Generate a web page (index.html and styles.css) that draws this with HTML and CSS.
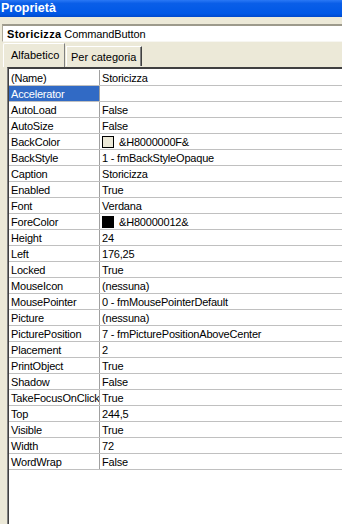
FILE: index.html
```html
<!DOCTYPE html>
<html lang="it">
<head>
    <meta charset="UTF-8">
    <title>Proprietà</title>
    <link rel="stylesheet" href="styles.css">
</head>
<body>
    <div class="window">
        <div class="titlebar">Proprietà</div>
        <div class="combo"><b>Storicizza</b> CommandButton</div>
        <div class="tabs">
            <div class="tab active">Alfabetico</div>
            <div class="tab">Per categoria</div>
        </div>
        <div class="grid" id="grid"></div>
    </div>
    <script>
        const props = [
            ["(Name)", "Storicizza"],
            ["Accelerator", ""],
            ["AutoLoad", "False"],
            ["AutoSize", "False"],
            ["BackColor", "&H8000000F&", "#ece9d8"],
            ["BackStyle", "1 - fmBackStyleOpaque"],
            ["Caption", "Storicizza"],
            ["Enabled", "True"],
            ["Font", "Verdana"],
            ["ForeColor", "&H80000012&", "#000000"],
            ["Height", "24"],
            ["Left", "176,25"],
            ["Locked", "True"],
            ["MouseIcon", "(nessuna)"],
            ["MousePointer", "0 - fmMousePointerDefault"],
            ["Picture", "(nessuna)"],
            ["PicturePosition", "7 - fmPicturePositionAboveCenter"],
            ["Placement", "2"],
            ["PrintObject", "True"],
            ["Shadow", "False"],
            ["TakeFocusOnClick", "True"],
            ["Top", "244,5"],
            ["Visible", "True"],
            ["Width", "72"],
            ["WordWrap", "False"]
        ];
        const grid = document.getElementById("grid");
        props.forEach(function (p, i) {
            let row = document.createElement("div");
            row.classList.add("row");
            let name = document.createElement("div");
            name.classList.add("name");
            if (i === 1) name.classList.add("selected");
            name.innerText = p[0];
            let value = document.createElement("div");
            value.classList.add("value");
            if (p[2]) {
                let sw = document.createElement("span");
                sw.classList.add("swatch");
                sw.style.background = p[2];
                value.appendChild(sw);
            }
            value.appendChild(document.createTextNode(p[1]));
            row.appendChild(name);
            row.appendChild(value);
            grid.appendChild(row);
        });
    </script>
</body>
</html>
```
FILE: styles.css
```css
body {
    margin: 0;
    background: #ffffff;
    font-family: 'Liberation Sans', Arial, sans-serif;
    font-size: 11px;
}
.window {
    width: 342px;
    height: 524px;
    background: #ece9d8;
    overflow: hidden;
}
.titlebar {
    height: 17px;
    line-height: 16px;
    padding-left: 1px;
    color: #ffffff;
    font-weight: bold;
    font-size: 12.5px;
    background: linear-gradient(#2a78f5, #0a5ee8 20%, #0058e6 80%, #0049cc);
}
.combo {
    margin: 7px 0 0 2px;
    height: 15px;
    line-height: 16px;
    background: #ffffff;
    border-top: 2px solid #9d9a8c;
    border-left: 1px solid #aca899;
    border-bottom: 1px solid #f7f6f1;
    padding-left: 4px;
    letter-spacing: -0.1px;
}
.combo b {
    letter-spacing: 0.3px;
}
.tabs {
    display: flex;
    align-items: flex-end;
    height: 24px;
    margin-top: 1px;
    padding-left: 3px;
}
.tab {
    height: 19px;
    line-height: 20px;
    padding: 0 0 0 4px;
    width: 70px;
    border-left: 1px solid #ffffff;
    border-top: 1px solid #ffffff;
    border-right: 1px solid #404040;
    box-shadow: inset -1px 0 #808080;
    margin-left: 1px;
    margin-bottom: 1px;
}
.tab.active {
    height: 23px;
    line-height: 22px;
    width: 53px;
    padding-left: 7px;
    margin-left: 0;
    margin-bottom: 0;
    border-right: 1px solid #808080;
    box-shadow: none;
    border-top-left-radius: 2px;
}
.grid {
    margin-left: 7px;
    height: 456px;
    background: #ffffff;
    border-left: 1px solid #808080;
    border-top: 1px solid #404040;
    box-shadow: inset 1px 1px #404040;
    padding: 2px 0 0 1px;
    letter-spacing: -0.2px;
}
.row {
    display: flex;
    height: 15px;
    border-bottom: 1px solid #c0c0c0;
    line-height: 16px;
}
.name {
    width: 88px;
    padding-left: 2px;
    border-right: 1px solid #a0a0a0;
    white-space: nowrap;
    overflow: hidden;
}
.name.selected {
    background: #316ac5;
    color: #ffffff;
}
.value {
    flex: 1;
    padding-left: 2px;
    white-space: nowrap;
    display: flex;
    align-items: center;
}
.swatch {
    width: 10px;
    height: 10px;
    border: 1px solid #000000;
    margin-right: 5px;
}
```
